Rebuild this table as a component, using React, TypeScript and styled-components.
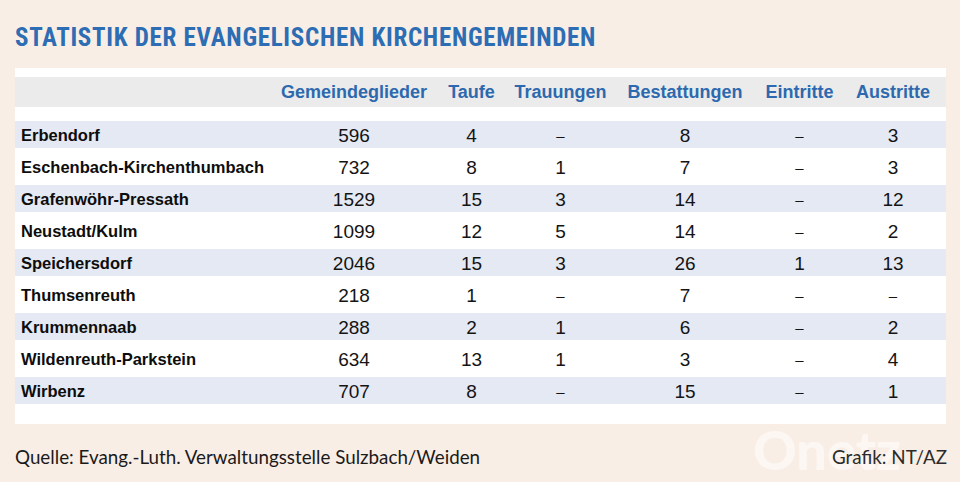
import styled, { createGlobalStyle } from "styled-components";

const GlobalStyle = createGlobalStyle`
  html, body {
    margin: 0;
    padding: 0;
    background: #f9eee6;
  }
  #root {
    width: 960px;
    height: 482px;
    overflow: hidden;
  }
`;

type Row = {
  name: string;
  values: string[];
};

const columns = [
  "Gemeindeglieder",
  "Taufe",
  "Trauungen",
  "Bestattungen",
  "Eintritte",
  "Austritte",
];

const rows: Row[] = [
  { name: "Erbendorf", values: ["596", "4", "–", "8", "–", "3"] },
  { name: "Eschenbach-Kirchenthumbach", values: ["732", "8", "1", "7", "–", "3"] },
  { name: "Grafenwöhr-Pressath", values: ["1529", "15", "3", "14", "–", "12"] },
  { name: "Neustadt/Kulm", values: ["1099", "12", "5", "14", "–", "2"] },
  { name: "Speichersdorf", values: ["2046", "15", "3", "26", "1", "13"] },
  { name: "Thumsenreuth", values: ["218", "1", "–", "7", "–", "–"] },
  { name: "Krummennaab", values: ["288", "2", "1", "6", "–", "2"] },
  { name: "Wildenreuth-Parkstein", values: ["634", "13", "1", "3", "–", "4"] },
  { name: "Wirbenz", values: ["707", "8", "–", "15", "–", "1"] },
];

function App() {
  return (
    <Page>
      <GlobalStyle />
      <Title>Statistik der evangelischen Kirchengemeinden</Title>
      <Panel>
        <HeaderRow>
          <span />
          {columns.map((c) => (
            <HeaderCell key={c}>{c}</HeaderCell>
          ))}
        </HeaderRow>
        <Body>
          {rows.map((row, i) => (
            <DataRow key={row.name} $shaded={i % 2 === 0}>
              <NameCell>{row.name}</NameCell>
              {row.values.map((v, j) => (
                <ValueCell key={j} $dash={v === "–"}>
                  {v}
                </ValueCell>
              ))}
            </DataRow>
          ))}
        </Body>
      </Panel>
      <Footer>
        <Watermark aria-hidden="true">Onetz</Watermark>
        <Source>Quelle: Evang.-Luth. Verwaltungsstelle Sulzbach/Weiden</Source>
        <Credit>Grafik: NT/AZ</Credit>
      </Footer>
    </Page>
  );
}

export default App;

const Page = styled.div`
  width: 960px;
  height: 482px;
  padding: 0 14px 0 15px;
  box-sizing: border-box;
  display: flex;
  flex-direction: column;
`;

const Title = styled.h1`
  margin: 23px 0 0 0;
  font-family: "Roboto Condensed", "Roboto", sans-serif;
  font-stretch: condensed;
  font-weight: 700;
  font-size: 25px;
  line-height: 30px;
  text-transform: uppercase;
  color: #2c6db4;
  letter-spacing: 0.7px;
`;

const Panel = styled.section`
  margin-top: 15px;
  width: 931px;
  background: #fff;
  padding: 9px 0 17px 0;
  box-sizing: border-box;
`;

// label column may not grow with its text, or the rows would drift apart
const gridColumns = `minmax(0, 1fr) 148px 47px 91px 118px 71px 76px`;

const HeaderRow = styled.div`
  display: grid;
  grid-template-columns: ${gridColumns};
  column-gap: 20px;
  align-items: center;
  height: 30px;
  padding: 0 15px 0 6px;
  background: #ebebeb;
`;

const HeaderCell = styled.div`
  font-family: "Liberation Sans", Arial, sans-serif;
  font-weight: 700;
  font-size: 18px;
  color: #2d69ae;
  white-space: nowrap;
  display: flex;
  justify-content: center;
`;

const Body = styled.div`
  margin-top: 12px;
  display: flex;
  flex-direction: column;
`;

const DataRow = styled.div<{ $shaded: boolean }>`
  display: grid;
  grid-template-columns: ${gridColumns};
  column-gap: 20px;
  align-items: center;
  height: 32px;
  padding: 0 15px 0 6px;
  background: ${(p) => (p.$shaded ? "#e5e9f3" : "#fff")};
  box-shadow: inset 0 2px #fff, inset 0 -3px #fff;
`;

const NameCell = styled.div`
  font-family: "Liberation Sans", Arial, sans-serif;
  font-weight: 700;
  font-size: 16.5px;
  color: #0d0d0d;
  white-space: nowrap;
  padding-top: 1px;
`;

const ValueCell = styled.div<{ $dash: boolean }>`
  font-family: "Liberation Sans", Arial, sans-serif;
  font-size: ${(p) => (p.$dash ? "15px" : "19px")};
  color: #141414;
  text-align: center;
  padding-top: 1px;
`;

const Footer = styled.footer`
  position: relative;
  display: flex;
  justify-content: space-between;
  align-items: center;
  width: 931px;
  padding-top: 22px;
  height: 22px;
`;

const Watermark = styled.div`
  position: absolute;
  left: 738px;
  top: -1px;
  font-family: "Lato", sans-serif;
  font-weight: 900;
  font-size: 54px;
  line-height: 54px;
  color: rgba(255, 255, 255, 0.5);
  pointer-events: none;
  user-select: none;
`;

const FooterText = styled.div`
  position: relative;
  font-family: "Lato", sans-serif;
  font-size: 18.8px;
  line-height: 22px;
  white-space: nowrap;
`;

const Source = styled(FooterText)`
  color: #1a1a1a;
`;

const Credit = styled(FooterText)`
  color: #2b2b2b;
  margin-right: -1px;
`;
